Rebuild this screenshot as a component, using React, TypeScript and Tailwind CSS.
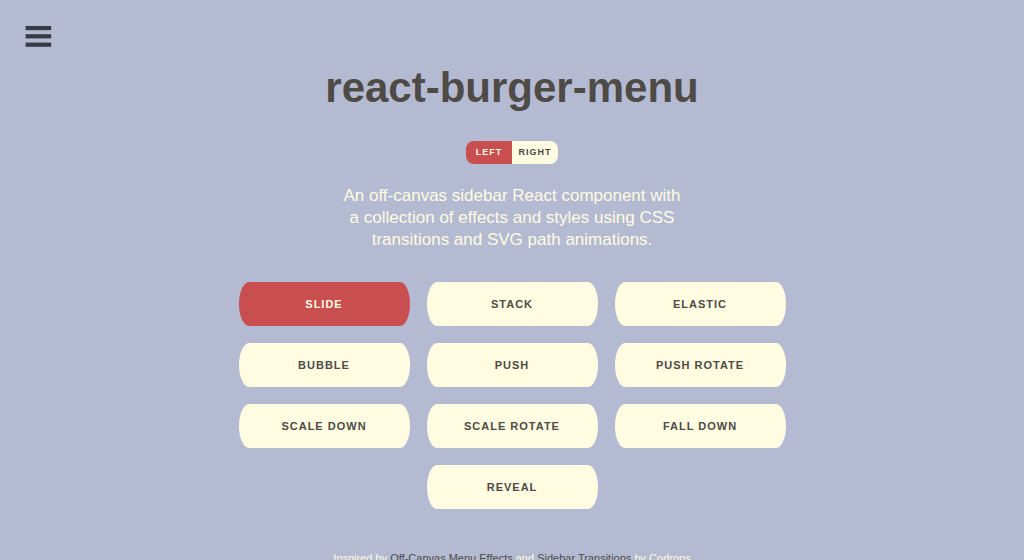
import { useState } from "react";

const sides = ["Left", "Right"];

const effects = [
  "Slide",
  "Stack",
  "Elastic",
  "Bubble",
  "Push",
  "Push Rotate",
  "Scale Down",
  "Scale Rotate",
  "Fall Down",
  "Reveal",
];

function tone(active: boolean) {
  return active ? "bg-[#c94e50] text-[#fffce1]" : "bg-[#fffce1] text-[#4e4a46]";
}

function BurgerButton() {
  return (
    <button type="button" aria-label="Open menu" className="fixed top-[26px] left-[25px] cursor-pointer">
      <svg width="27" height="21" viewBox="0 0 27 21" className="block fill-[#373a47]" aria-hidden="true">
        <rect x="0.6" width="25.6" height="4.2" />
        <rect x="0.6" y="8.2" width="25.6" height="4.2" />
        <rect x="0.6" y="16.6" width="25.6" height="4.2" />
      </svg>
    </button>
  );
}

export default function App() {
  const [side, setSide] = useState("Left");
  const [effect, setEffect] = useState("Slide");

  return (
    <div className="min-h-screen bg-[#b4bad2] font-['Liberation_Sans',Arial,sans-serif] text-[#fffce1]">
      <BurgerButton />
      <main className="mx-auto flex max-w-[564px] flex-col items-center px-2 pt-16 pb-8 text-center">
        <h1 className="text-[42px] leading-[48px] font-bold text-[#4e4a46]">react-burger-menu</h1>
        <div className="mt-[29px] flex overflow-hidden rounded-lg">
          {sides.map((name) => (
            <button
              key={name}
              type="button"
              aria-pressed={side === name}
              onClick={() => setSide(name)}
              className={`h-[23px] w-[46px] cursor-pointer text-[9px] font-bold tracking-[1px] uppercase ${tone(side === name)}`}
            >
              {name}
            </button>
          ))}
        </div>
        <p className="mt-[21px] max-w-[350px] text-[17px] leading-[22px]">
          An off-canvas sidebar React component with a collection of effects and styles using CSS transitions and SVG
          path animations.
        </p>
        <nav className="mt-[31px] flex flex-wrap justify-center gap-[17px]">
          {effects.map((name) => (
            <button
              key={name}
              type="button"
              aria-pressed={effect === name}
              onClick={() => setEffect(name)}
              className={`h-11 w-[171px] cursor-pointer rounded-[10px/22px] text-[11px] font-bold tracking-[1px] uppercase ${tone(effect === name)}`}
            >
              {name}
            </button>
          ))}
        </nav>
        <p className="mt-[41px] text-[11px] leading-4">
          Inspired by{" "}
          <a href="#off-canvas-menu-effects" className="text-[#4e4a46]">
            Off-Canvas Menu Effects
          </a>{" "}
          and{" "}
          <a href="#sidebar-transitions" className="text-[#4e4a46]">
            Sidebar Transitions
          </a>{" "}
          by Codrops
        </p>
      </main>
    </div>
  );
}
